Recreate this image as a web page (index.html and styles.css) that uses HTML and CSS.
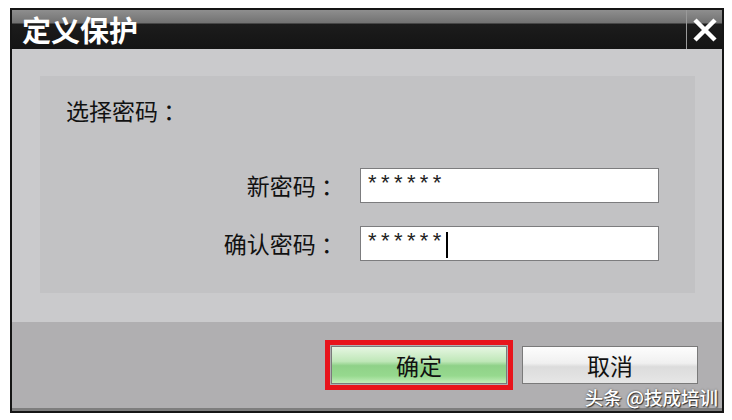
FILE: index.html
```html
<!DOCTYPE html>
<html lang="zh-CN">
<head>
    <meta charset="UTF-8">
    <meta name="viewport" content="width=device-width, initial-scale=1.0">
    <title>定义保护</title>
    <link rel="stylesheet" href="styles.css">
</head>
<body>
    <div class="dialog">
        <div class="titlebar">
            <div class="title">定义保护</div>
            <div class="close">
                <svg width="26" height="24" viewBox="0 0 26 24">
                    <path d="M3 2 L23 22 M23 2 L3 22" stroke="#fff" stroke-width="4.5" fill="none"/>
                </svg>
            </div>
        </div>
        <div class="content">
            <div class="panel">
                <div class="heading">选择密码 ：</div>
                <div class="form">
                    <div class="label">新密码 ：</div>
                    <div class="field">******</div>
                    <div class="label">确认密码 ：</div>
                    <div class="field">******<span class="caret"></span></div>
                </div>
            </div>
        </div>
        <div class="footer">
            <div class="highlight">
                <button class="btn btn-ok">确定</button>
            </div>
            <button class="btn btn-cancel">取消</button>
        </div>
        <div class="strip"></div>
        <div class="watermark">头条 @技成培训</div>
    </div>
</body>
</html>
```

FILE: styles.css
```css
body {
    margin: 0;
    background: #fff;
    font-family: "Noto Sans CJK SC", "Noto Sans", sans-serif;
}

.dialog {
    position: relative;
    width: 710px;
    margin: 8px 0 0 10px;
    border: 2px solid #151515;
    background: #cacacc;
}

.titlebar {
    display: flex;
    height: 39px;
    background: linear-gradient(to bottom, #8e8e8e 0, #727272 13px, #1c1c1c 14px, #141414 100%);
}

.title {
    flex: 1;
    padding-left: 10px;
    color: #fff;
    font-size: 29px;
    font-weight: bold;
    line-height: 39px;
}

.close {
    width: 35px;
    border-left: 1px solid #9a9a9a;
    display: flex;
    justify-content: center;
    align-items: center;
}

.content {
    padding: 27px 27px 29px 28px;
}

.panel {
    height: 217px;
    background: #c2c2c4;
    padding: 20px 0 0 26px;
    box-sizing: border-box;
}

.heading {
    font-size: 23px;
    line-height: 28px;
    color: #111;
}

.form {
    display: grid;
    grid-template-columns: 278px 299px;
    column-gap: 16px;
    row-gap: 23px;
    margin-top: 44px;
}

.label {
    text-align: right;
    font-size: 23px;
    line-height: 35px;
    color: #111;
}

.field {
    height: 35px;
    box-sizing: border-box;
    background: #fff;
    border: 1px solid #7c7c7e;
    padding: 3px 0 0 7px;
    font-family: "Liberation Sans", sans-serif;
    font-size: 22px;
    letter-spacing: 4.4px;
    line-height: 22px;
    color: #222;
    display: flex;
    align-items: flex-start;
}

.caret {
    width: 2px;
    height: 26px;
    margin-top: 2px;
    background: #000;
}

.footer {
    height: 86px;
    background: #b0afb1;
    display: flex;
    justify-content: flex-end;
    align-items: center;
    gap: 9px;
    padding-right: 24px;
}

.highlight {
    border: 5px solid #e8141c;
    padding: 1px;
    display: flex;
}

.btn {
    width: 176px;
    height: 38px;
    border: 1px solid #7a7a7a;
    font-family: "Noto Sans CJK SC", sans-serif;
    font-size: 23px;
    color: #111;
    padding: 0;
    cursor: pointer;
}

.btn-ok {
    background: linear-gradient(to bottom, #e6f6e2 0%, #bfe7b8 40%, #8fd188 52%, #96d98e 80%, #c2edba 100%);
}

.btn-cancel {
    background: linear-gradient(to bottom, #fdfdfd 0%, #f0f0f0 45%, #dcdcdc 55%, #e6e6e6 100%);
}

.strip {
    height: 3px;
    background: #7e7e7e;
}

.watermark {
    position: absolute;
    right: 4px;
    bottom: 1px;
    color: #fff;
    font-size: 18.5px;
    font-weight: 500;
    text-shadow: 1px 1px 1px #333, 0 0 2px #555;
}
```
